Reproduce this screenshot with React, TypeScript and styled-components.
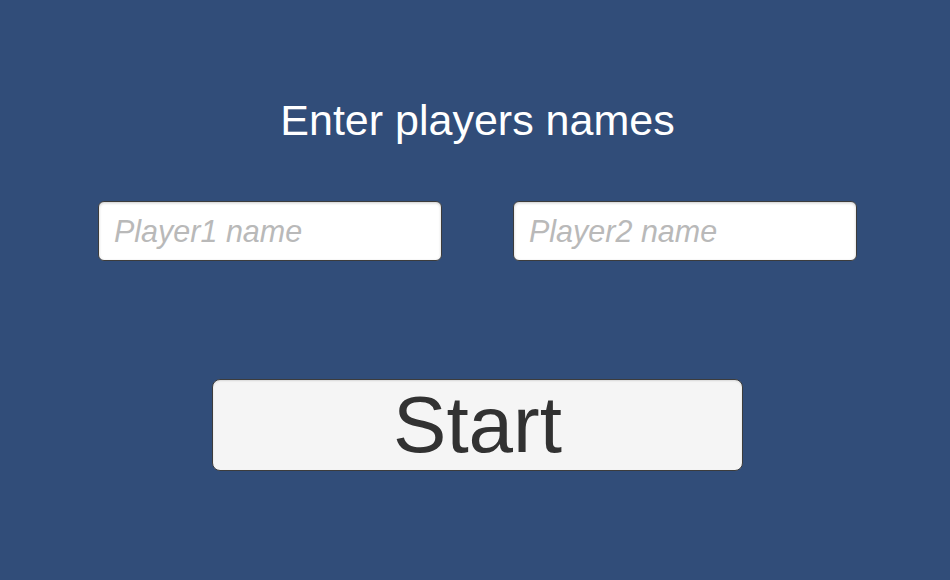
import React from 'react';
import styled, { createGlobalStyle } from 'styled-components';

const GlobalStyle = createGlobalStyle`
  html, body {
    margin: 0;
    padding: 0;
    background: #314d79;
  }
`;

const Screen = styled.div`
  width: 950px;
  height: 580px;
  box-sizing: border-box;
  padding: 95px 0 0 5px;
  display: flex;
  flex-direction: column;
  align-items: center;
  background: #314d79;
  font-family: 'Liberation Sans', Arial, sans-serif;
`;

const Title = styled.h1`
  margin: 0;
  font-size: 43px;
  font-weight: normal;
  line-height: 50px;
  color: #ffffff;
`;

const InputRow = styled.div`
  display: flex;
  gap: 71px;
  margin-top: 56px;
`;

const NameInput = styled.input`
  width: 344px;
  height: 60px;
  box-sizing: border-box;
  padding: 0 15px;
  border: 1px solid #3c3c3c;
  border-radius: 6px;
  background: #ffffff;
  font-family: 'Liberation Sans', Arial, sans-serif;
  font-size: 30.5px;
  font-style: italic;
  color: #323232;
  outline: none;
  box-shadow: inset 0 1px 3px rgba(0, 0, 0, 0.2);

  &::placeholder {
    color: #b9b9b9;
  }
`;

const StartButton = styled.button`
  margin-top: 118px;
  width: 531px;
  height: 92px;
  box-sizing: border-box;
  border: 1px solid #3c3c3c;
  border-radius: 8px;
  background: #f5f5f5;
  font-family: 'Liberation Sans', Arial, sans-serif;
  font-size: 80px;
  line-height: 1;
  color: #323232;
  padding: 0;
  cursor: pointer;
  box-shadow: inset 0 1px 2px rgba(0, 0, 0, 0.12);
`;

const App = () => {
  return (
    <>
      <GlobalStyle />
      <Screen>
        <Title>Enter players names</Title>
        <InputRow>
          <NameInput type="text" placeholder="Player1 name" />
          <NameInput type="text" placeholder="Player2 name" />
        </InputRow>
        <StartButton>Start</StartButton>
      </Screen>
    </>
  );
};

export default App;
